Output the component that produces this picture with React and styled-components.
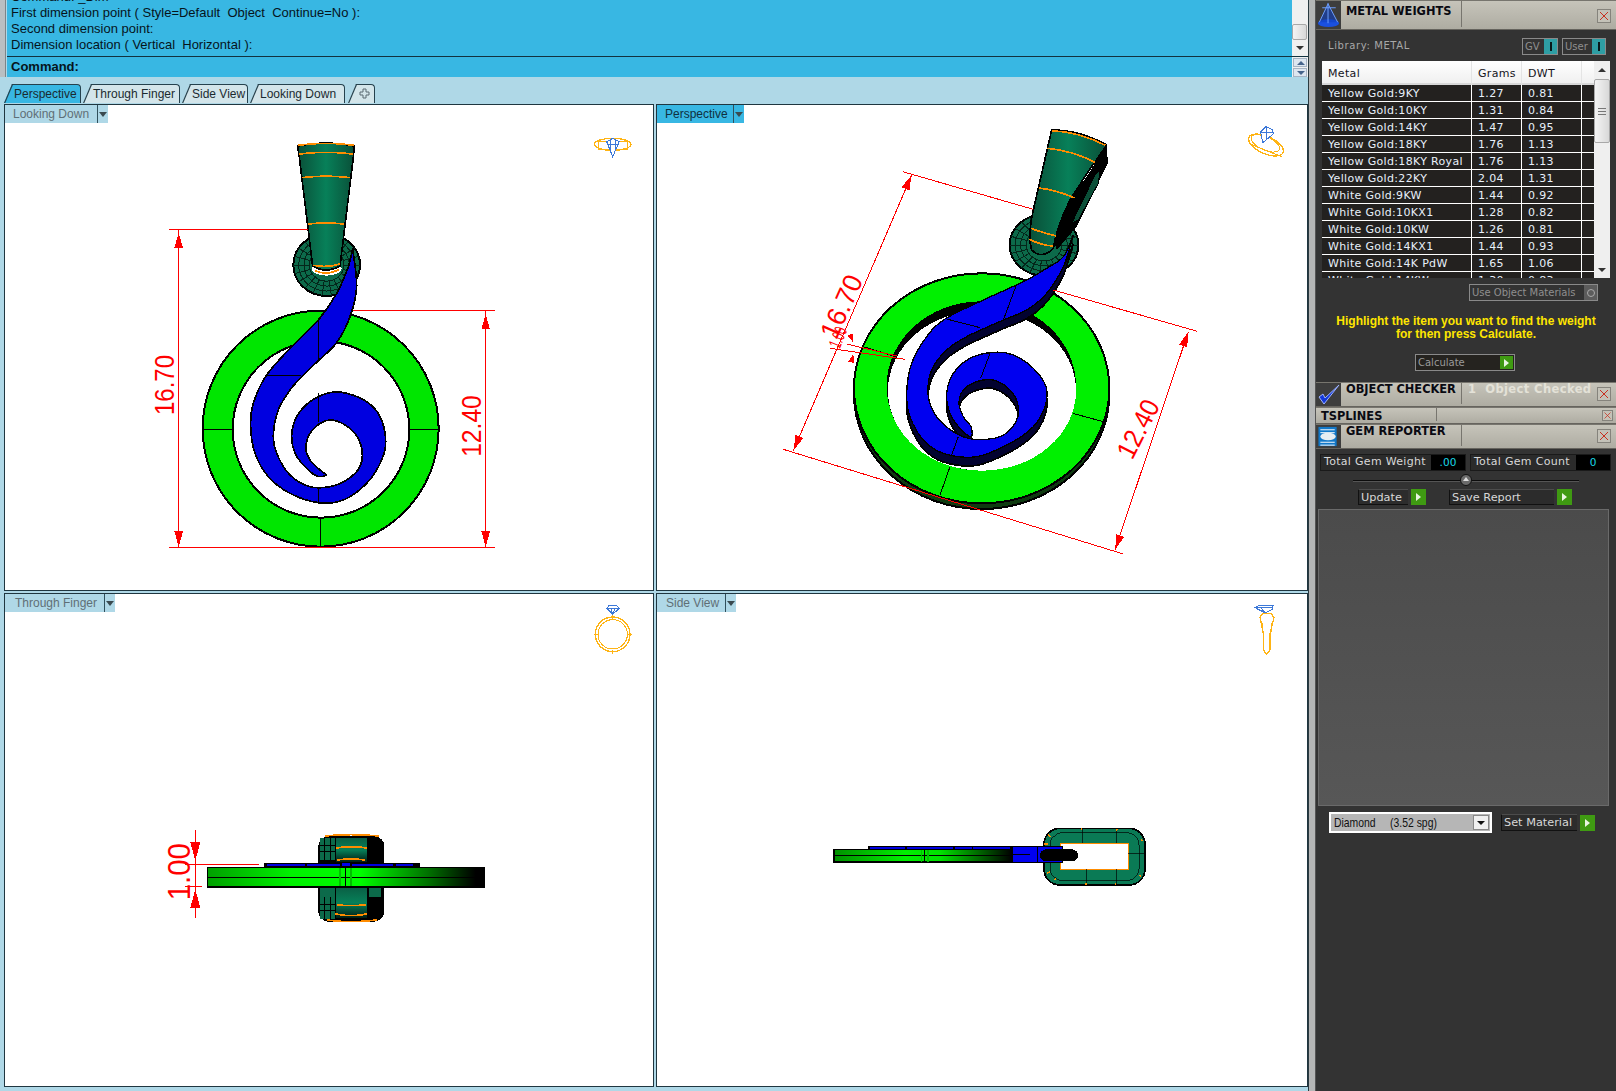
import React from "react";
import styled, { createGlobalStyle } from "styled-components";

const GlobalStyle = createGlobalStyle`
  html, body { margin: 0; padding: 0; background: #333; }
  #root { width: 1616px; height: 1091px; overflow: hidden; }
`;

// ---------- data ----------

const METALS = [
  ["Yellow Gold:9KY", "1.27", "0.81"],
  ["Yellow Gold:10KY", "1.31", "0.84"],
  ["Yellow Gold:14KY", "1.47", "0.95"],
  ["Yellow Gold:18KY", "1.76", "1.13"],
  ["Yellow Gold:18KY Royal", "1.76", "1.13"],
  ["Yellow Gold:22KY", "2.04", "1.31"],
  ["White Gold:9KW", "1.44", "0.92"],
  ["White Gold:10KX1", "1.28", "0.82"],
  ["White Gold:10KW", "1.26", "0.81"],
  ["White Gold:14KX1", "1.44", "0.93"],
  ["White Gold:14K PdW", "1.65", "1.06"],
  ["White Gold:14KW", "1.30", "0.83"],
];

const TABS = [
  { name: "Perspective", w: 77, gap: 2, active: true },
  { name: "Through Finger", w: 97, gap: 2 },
  { name: "Side View", w: 66, gap: 2 },
  { name: "Looking Down", w: 95, gap: 3 },
];

// catmull-rom through the traced points, coordinates are 3x screen px from the crops
const smooth = (pts) => {
  const n = pts.length;
  let d = `M${pts[0][0]} ${pts[0][1]}`;
  for (let i = 0; i < n - 1; i++) {
    const p0 = pts[Math.max(i - 1, 0)];
    const p1 = pts[i];
    const p2 = pts[i + 1];
    const p3 = pts[Math.min(i + 2, n - 1)];
    const c1 = [p1[0] + (p2[0] - p0[0]) / 6, p1[1] + (p2[1] - p0[1]) / 6];
    const c2 = [p2[0] - (p3[0] - p1[0]) / 6, p2[1] - (p3[1] - p1[1]) / 6];
    d += `C${c1[0]} ${c1[1]} ${c2[0]} ${c2[1]} ${p2[0]} ${p2[1]}`;
  }
  return d;
};

const spiralTop = smooth([
  [638, 385], [625, 440], [590, 520], [535, 600], [460, 675], [380, 765], [340, 850], [332, 920],
  [345, 1000], [385, 1070], [450, 1120], [535, 1148], [610, 1140], [680, 1090], [725, 1020], [737, 960],
  [720, 890], [680, 845], [620, 820], [570, 818], [510, 845], [470, 890], [455, 945], [465, 1000],
  [495, 1040], [530, 1068], [558, 1065], [540, 1050], [510, 1020], [498, 985], [510, 940], [550, 905],
  [590, 903], [640, 935], [665, 985], [660, 1040], [620, 1080], [570, 1100], [510, 1100], [450, 1065],
  [410, 1000], [400, 945], [415, 870], [450, 810], [490, 765], [535, 722], [590, 668], [630, 590],
  [650, 500], [638, 385],
]) + "Z";

const spiralPersp = smooth([
  [910, 345], [880, 410], [830, 445], [760, 485], [640, 540], [525, 597], [470, 650], [425, 730],
  [410, 820], [420, 890], [460, 960], [520, 1000], [620, 1010], [720, 970], [790, 920], [825, 860],
  [828, 800], [790, 745], [730, 705], [670, 697], [600, 715], [550, 760], [530, 820], [540, 880],
  [570, 925], [603, 950], [603, 920], [580, 890], [567, 850], [580, 810], [620, 785], [670, 780],
  [720, 810], [745, 860], [735, 910], [690, 950], [610, 958], [550, 935], [500, 890], [475, 830],
  [485, 750], [530, 690], [590, 650], [700, 600], [770, 570], [830, 520], [880, 440], [910, 345],
]) + "Z";

// ---------- drawing helpers ----------

const Canvas = styled.svg.attrs({ shapeRendering: "crispEdges" })`
  display: block;
  width: 100%;
  height: 100%;
`;

const DimText = styled.text.attrs({ textAnchor: "middle", dominantBaseline: "central", lengthAdjust: "spacingAndGlyphs" })`
  font-family: "Liberation Sans", Arial, sans-serif;
  fill: #ff0000;
`;

const Sketch = ({ at, children }) => (
  <g transform={`translate(${at[0]} ${at[1]}) scale(${1 / 3})`}>{children}</g>
);

const Arrow = ({ x, y, a, l = 46, w = 13 }) => (
  <polygon points={`0,0 ${-w},${l} ${w},${l}`} fill="#ff0000" transform={`translate(${x} ${y}) rotate(${a})`} />
);

const Dim = ({ x, y, a, len, size = 81, children }) => (
  <DimText transform={`translate(${x} ${y}) rotate(${a})`} fontSize={size} textLength={len}>
    {children}
  </DimText>
);

const Red = ({ d }) => <path d={d} stroke="#ff0000" strokeWidth="3" fill="none" />;
const Ink = ({ d, w = 3 }) => <path d={d} stroke="#000" strokeWidth={w} fill="none" />;
const Orange = ({ d, w = 5 }) => <path d={d} stroke="#ff8c00" strokeWidth={w} fill="none" />;

const Bulb = ({ cx, cy, rx, ry }) => {
  const spokes = Array.from({ length: 22 }, (v, i) => (i * Math.PI * 2) / 22);
  return (
    <g>
      <ellipse cx={cx} cy={cy} rx={rx} ry={ry} fill="#0c6a4a" stroke="#000" strokeWidth="6" />
      {[0.84, 0.68, 0.52].map((k) => (
        <ellipse key={k} cx={cx} cy={cy} rx={rx * k} ry={ry * k} fill="none" stroke="#04261a" strokeWidth="3" />
      ))}
      {spokes.map((s) => (
        <path
          key={s}
          d={`M${cx + Math.cos(s) * rx * 0.5} ${cy + Math.sin(s) * ry * 0.5}L${cx + Math.cos(s) * rx} ${cy + Math.sin(s) * ry}`}
          stroke="#04261a"
          strokeWidth="3"
        />
      ))}
    </g>
  );
};

const Gradients = () => (
  <defs>
    <linearGradient id="cone" x1="0" x2="1" y1="0" y2="0">
      <stop offset="0" stopColor="#0a4f38" />
      <stop offset="0.5" stopColor="#078059" />
      <stop offset="1" stopColor="#0a4f38" />
    </linearGradient>
    <linearGradient id="coneV" x1="0" x2="0" y1="0" y2="1">
      <stop offset="0" stopColor="#0a5f44" />
      <stop offset="0.5" stopColor="#078059" />
      <stop offset="1" stopColor="#021f15" />
    </linearGradient>
    <linearGradient id="barTF" x1="0" x2="1" y1="0" y2="0">
      <stop offset="0" stopColor="#00a000" />
      <stop offset="0.3" stopColor="#00f000" />
      <stop offset="0.55" stopColor="#00ff00" />
      <stop offset="0.8" stopColor="#007000" />
      <stop offset="0.97" stopColor="#000" />
    </linearGradient>
    <linearGradient id="barSV" x1="0" x2="1" y1="0" y2="0">
      <stop offset="0" stopColor="#009000" />
      <stop offset="0.4" stopColor="#00f000" />
      <stop offset="0.6" stopColor="#00e000" />
      <stop offset="1" stopColor="#000" />
    </linearGradient>
  </defs>
);

// ---------- the four model drawings ----------

const LookingDownModel = () => (
  <Sketch at={[140, 120]}>
    <circle cx="542" cy="926" r="354" fill="#00e600" stroke="#000" strokeWidth="6" />
    <circle cx="543" cy="928" r="265" fill="#fff" stroke="#000" strokeWidth="6" />
    <Ink d="M188 928H278M808 928H897M542 1192V1280" />
    <Bulb cx={560} cy={435} rx={100} ry={93} />
    <ellipse cx="560" cy="445" rx="45" ry="22" fill="#fff" />
    <path d="M473 78Q558 60 643 78L640 112L600 438Q558 462 518 438L478 112Z" fill="url(#cone)" stroke="#000" strokeWidth="5" />
    <Orange d="M473 76Q558 64 643 76M478 102Q558 92 638 102M486 173Q558 164 630 173M503 312Q558 306 612 312M520 436Q560 444 600 432M524 452Q560 468 598 448" />
    <path d={spiralTop} fill="#0000e0" stroke="#000" strokeWidth="5" />
    <Ink d="M536 600V722M380 767H482M536 820V905M536 1100V1148" />
    <Red d="M88 328H505M116 328V1282M88 1282H1065M640 572H1065M1037 572V1282" />
    <Arrow x={116} y={338} a={0} />
    <Arrow x={116} y={1280} a={180} />
    <Arrow x={1037} y={582} a={0} />
    <Arrow x={1037} y={1280} a={180} />
    <Dim x={75} y={795} a={-90} len={180}>16.70</Dim>
    <Dim x={995} y={918} a={-90} len={185}>12.40</Dim>
  </Sketch>
);

const PerspectiveModel = () => (
  <Sketch at={[770, 120]}>
    <ellipse cx="635" cy="822" rx="383" ry="345" fill="#0e3a10" stroke="#000" strokeWidth="6" />
    <ellipse cx="635" cy="805" rx="383" ry="345" fill="#00f000" stroke="#000" strokeWidth="6" />
    <ellipse cx="634" cy="798" rx="284" ry="254" fill="#000" />
    <ellipse cx="636" cy="812" rx="282" ry="240" fill="#fff" />
    <Ink d="M280 680L370 708M908 880L1000 905M540 1040L510 1125" />
    <Bulb cx={822} cy={375} rx={103} ry={92} />
    <path d="M1010 75L1014 130L920 320L860 390L840 320L950 170Z" fill="#000" />
    <path d="M975 165L990 150L985 190L925 300L905 310Z" fill="#0b4f38" stroke="#000" strokeWidth="3" />
    <path d="M845 30Q930 30 1010 75Q950 160 900 240Q860 320 850 385Q815 420 785 390Q772 350 790 270Z" fill="url(#cone)" stroke="#000" strokeWidth="5" />
    <Orange d="M845 32Q930 36 1006 76M832 85Q910 92 976 128M806 204Q860 210 914 234M782 325Q825 340 858 348M778 358Q815 376 848 378" />
    <path d={spiralPersp} fill="#020230" stroke="#000" strokeWidth="5" transform="translate(0 26)" />
    <path d={spiralPersp} fill="#0000f0" stroke="#000" strokeWidth="4" />
    <Ink d="M738 498L700 600M530 597L630 623M660 700L632 775M565 950L545 1005" />
    <Red d="M398 155L790 268M425 165L70 992M40 988L1060 1302M850 510L1282 634M1255 635L1035 1290M180 685L405 718M230 672L380 708" />
    <Arrow x={424} y={166} a={23} l={44} />
    <Arrow x={71} y={990} a={203} l={44} />
    <Arrow x={1254} y={636} a={19} l={44} />
    <Arrow x={1036} y={1288} a={199} l={44} />
    <Arrow x={250} y={668} a={160} l={26} w={9} />
    <Arrow x={250} y={702} a={15} l={26} w={9} />
    <Dim x={215} y={560} a={-66} len={200}>16.70</Dim>
    <Dim x={204} y={652} a={-68} len={62} size={54}>1.00</Dim>
    <Dim x={1105} y={927} a={-63} len={186}>12.40</Dim>
  </Sketch>
);

const ThroughFingerModel = () => (
  <Sketch at={[150, 810]}>
    <rect x="505" y="78" width="198" height="257" rx="32" fill="#000" />
    <rect x="510" y="85" width="46" height="66" fill="#0c6a4a" />
    <rect x="510" y="262" width="46" height="66" fill="#0c6a4a" />
    <Ink d="M510 105H556M510 125H556M524 85V150M540 85V150M510 282H556M510 302H556M524 262V328M540 262V328" />
    <rect x="558" y="85" width="93" height="70" fill="url(#coneV)" />
    <rect x="558" y="232" width="93" height="92" fill="url(#coneV)" />
    <rect x="656" y="232" width="38" height="28" fill="#0c6a4a" />
    <rect x="510" y="232" width="44" height="28" fill="#0c6a4a" />
    <Orange d="M525 78Q600 70 688 78M558 114Q605 106 650 114M560 150Q605 144 646 150M560 284Q605 290 648 284M556 312Q605 322 650 312M530 330Q600 340 680 330" />
    <rect x="342" y="160" width="468" height="14" fill="#000" />
    <path d="M350 165H465M470 165H570M605 165H730M738 165H790" stroke="#0000e0" strokeWidth="6" />
    <rect x="575" y="160" width="24" height="9" fill="#0000f0" />
    <rect x="172" y="172" width="830" height="58" fill="url(#barTF)" stroke="#000" strokeWidth="5" />
    <Ink d="M172 203H1000M586 172V230" w={3} />
    <path d="M570 174V228M603 174V228" stroke="#00c000" strokeWidth="5" />
    <Red d="M136 60V325M105 162H326M105 229H155" />
    <Arrow x={136} y={152} a={180} l={55} w={15} />
    <Arrow x={136} y={238} a={0} l={55} w={15} />
    <Dim x={88} y={185} a={-90} len={172} size={92}>1.00</Dim>
  </Sketch>
);

const SideViewModel = () => (
  <Sketch at={[820, 810]}>
    <rect x="672" y="55" width="303" height="170" rx="48" fill="#0a7a55" stroke="#000" strokeWidth="5" />
    <rect x="690" y="68" width="267" height="144" rx="36" fill="none" stroke="#000" strokeWidth="2" />
    <rect x="722" y="100" width="204" height="78" fill="#fff" stroke="#ff8c00" strokeWidth="3" />
    <Ink d="M788 55V100M888 55V100M800 178V225M888 178V225M925 130H975" w={2} />
    <Orange d="M785 54V60M892 56L888 62M685 74L692 80M672 102H684M962 88L968 92M682 190L690 186M702 210L708 206M958 196L964 200M798 218V224M886 218V224" w={4} />
    <rect x="145" y="108" width="430" height="12" fill="#000" />
    <path d="M150 113H255M262 113H400M405 113H455M460 113H570" stroke="#0000e0" strokeWidth="5" />
    <rect x="42" y="118" width="533" height="38" fill="url(#barSV)" stroke="#000" strokeWidth="5" />
    <Ink d="M42 136H575M313 118V156" w={3} />
    <path d="M304 120V155M324 120V155" stroke="#00c000" strokeWidth="5" />
    <rect x="576" y="110" width="150" height="46" fill="#0000f0" stroke="#000" strokeWidth="3" />
    <Ink d="M652 110V155M580 133H630" w={3} />
    <rect x="660" y="118" width="114" height="36" rx="18" fill="#000" />
    <Ink d="M676 124V148" w={2} />
  </Sketch>
);

// orientation gizmos, top right corner of each view
const Gold = "#ffb414";
const Sky = "#3c78d8";

const GizmoTop = () => (
  <Sketch at={[570, 120]}>
    <ellipse cx="128" cy="73" rx="55" ry="18" fill="none" stroke={Gold} strokeWidth="4" />
    <rect x="84" y="65" width="88" height="22" fill="none" stroke={Gold} strokeWidth="3" />
    <path d="M110 65L128 55L148 65L128 110ZM120 60V90M136 60V90M110 72H148" fill="#fff" stroke={Sky} strokeWidth="3" />
  </Sketch>
);

const GizmoPersp = () => (
  <Sketch at={[1230, 120]}>
    <ellipse cx="108" cy="75" rx="56" ry="26" transform="rotate(24 108 75)" fill="none" stroke={Gold} strokeWidth="4" />
    <ellipse cx="106" cy="70" rx="46" ry="20" transform="rotate(24 106 70)" fill="none" stroke={Gold} strokeWidth="3" />
    <path d="M60 72L155 110" stroke={Gold} strokeWidth="3" />
    <path d="M92 35L108 20L128 30L130 42L98 68ZM108 20V60M92 38H130" fill="#fff" stroke={Sky} strokeWidth="3" />
  </Sketch>
);

const GizmoFinger = () => (
  <Sketch at={[575, 595]}>
    <circle cx="113" cy="118" r="52" fill="none" stroke={Gold} strokeWidth="4" />
    <circle cx="113" cy="118" r="44" fill="none" stroke={Gold} strokeWidth="3" />
    <path d="M113 58V72M58 118H72M156 118H170M113 165V177" stroke={Gold} strokeWidth="3" />
    <path d="M95 40L103 31H125L133 40L113 58ZM95 40H133M107 40L113 58M120 40L113 58" fill="none" stroke={Sky} strokeWidth="3" />
  </Sketch>
);

const GizmoSide = () => (
  <Sketch at={[1240, 595]}>
    <path d="M60 66L70 55H94L102 68L90 115V165L79 177L70 165V115Z" fill="none" stroke={Gold} strokeWidth="4" />
    <path d="M66 85L70 115M96 85L90 135" stroke={Gold} strokeWidth="3" />
    <path d="M45 38L60 30H100L96 44L76 54ZM45 38H98M62 38L76 54" fill="none" stroke={Sky} strokeWidth="3" />
  </Sketch>
);

// ---------- left: command area, tabs, viewports ----------

const Page = styled.div`
  display: flex;
  width: 1616px;
  height: 1091px;
`;

const Workspace = styled.div`
  display: flex;
  flex-direction: column;
  width: 1308px;
  background: #afd8e7;
`;

const CommandArea = styled.div`
  display: flex;
  height: 77px;
  flex: none;
`;

const Grip = styled.div`
  width: 6px;
  margin-right: 1px;
  background: #b9bfc2;
  border-right: 1px solid #7b8488;
  box-sizing: border-box;
`;

const CommandBody = styled.div`
  flex: 1;
  display: flex;
  flex-direction: column;
  background: #38b7e3;
  color: #06141c;
  font-family: "Liberation Sans", Arial, sans-serif;
`;

const Log = styled.div`
  height: 57px;
  box-sizing: border-box;
  flex: none;
  overflow: hidden;
  display: flex;
  flex-direction: column;
  justify-content: flex-end;
  padding: 0 0 3px 4px;
  border-bottom: 1px solid #12323f;
  font-size: 13px;
  line-height: 16px;
`;

const LogLine = styled.div`
  white-space: pre;
`;

const Prompt = styled.div`
  padding: 1px 0 0 4px;
  font-size: 13px;
  line-height: 17px;
  font-weight: bold;
`;

const CommandScroll = styled.div`
  width: 16px;
  flex: none;
  display: flex;
  flex-direction: column;
  background: #f0f0f0;
`;

const ScrollUpper = styled.div`
  height: 57px;
  flex: none;
  position: relative;
  border-bottom: 1px solid #12323f;
  box-sizing: border-box;
`;

const ScrollThumb = styled.div`
  position: absolute;
  top: ${(p) => p.$top}px;
  left: 0;
  width: ${(p) => p.$w || 15}px;
  height: ${(p) => p.$h}px;
  box-sizing: border-box;
  border: 1px solid #a8a8a8;
  border-radius: 2px;
  background: linear-gradient(90deg, #f4f4f4, #d8d8d8);
  display: flex;
  align-items: center;
  justify-content: center;
`;

const ThumbGrip = styled.div`
  width: 8px;
  height: 7px;
  background: repeating-linear-gradient(#777 0 1px, transparent 1px 3px);
`;

const ArrowGlyph = styled.div`
  position: absolute;
  left: ${(p) => p.$left || 4}px;
  top: ${(p) => p.$top}px;
  width: 0;
  height: 0;
  border-left: 4px solid transparent;
  border-right: 4px solid transparent;
  ${(p) => (p.$up ? "border-bottom" : "border-top")}: 4px solid ${(p) => p.$color || "#333"};
`;

const Spin = styled.div`
  height: 9px;
  margin: 1px 1px 0 1px;
  background: #dde6f0;
  border: 1px solid #a6b4c4;
  box-sizing: border-box;
  position: relative;
`;

const TabBar = styled.div`
  height: 27px;
  flex: none;
  box-sizing: border-box;
  padding: 7px 0 0 4px;
  display: flex;
  align-items: flex-start;
`;

const Tab = styled.div`
  position: relative;
  flex: none;
  width: ${(p) => p.$w}px;
  height: 19px;
  margin-right: ${(p) => p.$gap}px;
  box-sizing: border-box;
  padding-left: 10px;
  background: ${(p) => (p.$active ? "#38b7e3" : "#d3e5ea")};
  border-top: 1px solid #25414d;
  border-right: 1px solid #25414d;
  border-top-right-radius: 4px;
  clip-path: polygon(0 100%, 8px 0, 100% 0, 100% 100%);
  font-family: "Liberation Sans", Arial, sans-serif;
  font-size: 12px;
  line-height: 18px;
  white-space: nowrap;
  color: #1b2a30;

  &::before {
    content: "";
    position: absolute;
    left: 3px;
    top: -2px;
    width: 2px;
    height: 22px;
    background: #25414d;
    transform: rotate(23deg);
  }

  svg {
    display: block;
    width: 11px;
    height: 11px;
    margin: 3px 0 0 1px;
  }
`;

const ViewGrid = styled.div`
  flex: 1;
  display: grid;
  grid-template-columns: 650px 652px;
  grid-template-rows: 487px 494px;
  column-gap: 2px;
  row-gap: 2px;
  padding-left: 4px;
`;

const Viewport = styled.div`
  position: relative;
  box-sizing: border-box;
  background: #fff;
  border: 1px solid #1f3640;
  overflow: hidden;
`;

const ViewLabel = styled.div`
  position: absolute;
  top: 0;
  left: 0;
  width: ${(p) => p.$w}px;
  height: 18px;
  box-sizing: border-box;
  padding-left: ${(p) => p.$pad}px;
  background: ${(p) => (p.$active ? "#38b7e3" : "#afd8e7")};
  color: ${(p) => (p.$active ? "#103040" : "#5f6f76")};
  font-family: "Liberation Sans", Arial, sans-serif;
  font-size: 12px;
  line-height: 18px;
  white-space: nowrap;
`;

const ViewCaret = styled.div`
  position: absolute;
  right: 0;
  top: 0;
  width: 10px;
  height: 18px;
  border-left: 1px solid #30505c;

  &::after {
    content: "";
    position: absolute;
    left: 1px;
    top: 7px;
    border-left: 4px solid transparent;
    border-right: 4px solid transparent;
    border-top: 5px solid #3a4a50;
  }
`;

const View = ({ label, labelWidth, pad, active, box, children }) => (
  <Viewport>
    <Canvas viewBox={box.join(" ")}>
      <Gradients />
      {children}
    </Canvas>
    <ViewLabel $w={labelWidth} $pad={pad} $active={active}>
      {label}
      <ViewCaret />
    </ViewLabel>
  </Viewport>
);

// ---------- right: tool panels ----------

const Splitter = styled.div`
  width: 8px;
  flex: none;
  box-sizing: border-box;
  background: #b4b6b6;
  border-left: 1px solid #2a3a40;
  border-right: 1px solid #555;
`;

const Side = styled.div`
  flex: 1;
  display: flex;
  flex-direction: column;
  background: #333333;
  color: #ddd;
  font-family: "DejaVu Sans", Verdana, sans-serif;
  font-size: 11px;
`;

const Header = styled.div`
  position: relative;
  display: flex;
  height: ${(p) => p.$h}px;
  flex: none;
  margin-top: ${(p) => p.$mt || 0}px;
  box-sizing: border-box;
  background: linear-gradient(#c6c4ba, #aeaca2);
  border-top: 1px solid #77756e;
  border-bottom: 1px solid #66645e;
`;

const HeaderIcon = styled.div`
  width: 25px;
  flex: none;
  background: #3d3d3d;
`;

const HeaderTitle = styled.div`
  width: 121px;
  flex: none;
  box-sizing: border-box;
  padding: ${(p) => p.$pt || 0}px 0 0 5px;
  font-weight: bold;
  font-size: 11.4px;
  line-height: 13px;
  color: #0a0a12;
  border-right: 1px solid #77756e;
  margin-bottom: 2px;
`;

const HeaderNote = styled.div`
  padding-left: 6px;
  font-weight: bold;
  font-size: 11.5px;
  line-height: 13px;
  color: #e4e2d8;
  letter-spacing: 0.4px;
  white-space: pre;
`;

const Close = styled.div`
  position: absolute;
  right: ${(p) => p.$r || 5}px;
  top: ${(p) => p.$t}px;
  width: ${(p) => p.$s || 14}px;
  height: ${(p) => p.$s || 14}px;
  box-sizing: border-box;
  background: #c4c2b8;
  border: 1px solid #85837c;

  svg {
    display: block;
    width: 100%;
    height: 100%;
  }
`;

const CloseMark = ({ t, r, s }) => (
  <Close $t={t} $r={r} $s={s}>
    <svg viewBox="0 0 12 12">
      <path d="M2 2L10 10M10 2L2 10" stroke="#c83020" strokeWidth="1" fill="none" />
    </svg>
  </Close>
);

const IconSvg = styled.svg`
  display: block;
  width: 25px;
  height: 100%;
`;

const ScaleIcon = () => (
  <IconSvg viewBox="0 0 25 29">
    <ellipse cx="12.500" cy="23" rx="11" ry="4" fill="#1a50e0" />
    <path d="M12 3L3 22H22Z" fill="#0f3fc0" opacity="0.6" />
    <path d="M12 3L3 22M12 3L22 22M12 2V23M6 7H20" stroke="#6fa0ff" strokeWidth="1" fill="none" />
  </IconSvg>
);

const CheckIcon = () => (
  <IconSvg viewBox="0 0 25 23">
    <path d="M3 14L8 21L23 2L9 15L7 11Z" fill="#1438d8" stroke="#9fb4ff" strokeWidth="1" />
  </IconSvg>
);

const GemIcon = () => (
  <IconSvg viewBox="0 0 25 24">
    <rect x="2" y="2" width="19" height="20" fill="#1278c8" />
    <path d="M4 5H19M4 8H19M4 18H19M4 21H19" stroke="#fff" strokeWidth="1" />
    <ellipse cx="12" cy="12" rx="8" ry="4" fill="#e8eef2" />
  </IconSvg>
);

const LibraryRow = styled.div`
  display: flex;
  align-items: center;
  height: 16px;
  margin-top: 8px;
  padding: 0 10px 0 12px;
  gap: 4px;
  color: #a8a8a8;
  font-size: 10px;
`;

const LibraryName = styled.div`
  flex: 1;
  letter-spacing: 0.6px;
  padding-bottom: 2px;
`;

const Toggle = styled.div`
  display: flex;
  justify-content: space-between;
  width: ${(p) => p.$w}px;
  height: 17px;
  box-sizing: border-box;
  padding-left: 2px;
  border: 1px solid #8a8a8a;
  line-height: 16px;
  color: #8f8f8f;
  font-size: 10px;
  white-space: nowrap;
`;

const ToggleKnob = styled.div`
  width: 13px;
  background: ${(p) => (p.$off ? "#5c5c5c" : "#2e9ea4")};
  display: flex;
  align-items: center;
  justify-content: center;
`;

const KnobBar = styled.div`
  width: 2px;
  height: 9px;
  background: #08181a;
`;

const KnobRing = styled.div`
  width: 6px;
  height: 6px;
  border: 1px solid #aaa;
  border-radius: 50%;
`;

const MetalBox = styled.div`
  display: flex;
  height: 217px;
  margin: 7px 6px 0 6px;
  overflow: hidden;
  background: #fff;
`;

const MetalTable = styled.div`
  flex: 1;
  display: flex;
  flex-direction: column;
  overflow: hidden;
  letter-spacing: 0.33px;
`;

const metalColumns = "150px 50px 60px 11px";

const MetalHead = styled.div`
  display: grid;
  grid-template-columns: ${metalColumns};
  height: 24px;
  flex: none;
  box-sizing: border-box;
  line-height: 25px;
  color: #14141c;
  background: linear-gradient(#fff, #f0f0f0);
  border-bottom: 2px solid #d8d8d8;
`;

const MetalCell = styled.div`
  padding-left: 6px;
  border-right: 1px solid #e4e4e4;
  white-space: nowrap;
`;

const MetalRow = styled.div`
  display: grid;
  grid-template-columns: ${metalColumns};
  height: 17px;
  flex: none;
  box-sizing: border-box;
  background: #23211f;
  color: #e8f0fa;
  border-bottom: 1px solid #fff;
  line-height: 18px;
`;

const MetalValue = styled.div`
  padding-left: 6px;
  border-right: 1px solid #fff;
  white-space: nowrap;
`;

const MetalScroll = styled.div`
  position: relative;
  width: 16px;
  flex: none;
  background: #efefef;
`;

const MaterialsRow = styled.div`
  display: flex;
  justify-content: flex-end;
  margin: 6px 18px 0 0;
`;

const Hint = styled.div`
  margin-top: 14px;
  text-align: center;
  color: #ffe600;
  font-family: "Liberation Sans", Arial, sans-serif;
  font-weight: bold;
  font-size: 12px;
  line-height: 13px;
`;

const CalcRow = styled.div`
  display: flex;
  justify-content: center;
  margin: 13px 0 0 0;
  padding-right: 2px;
`;

const CalcBox = styled.div`
  display: flex;
  justify-content: space-between;
  align-items: center;
  width: 100px;
  height: 17px;
  box-sizing: border-box;
  padding: 0 1px 0 2px;
  background: #25231f;
  border: 1px solid #8a8a8a;
  color: #9a9a9a;
  font-size: 10px;
`;

const Go = styled.div`
  width: ${(p) => p.$w || 15}px;
  height: ${(p) => p.$h || 16}px;
  flex: none;
  background: #3f9a12;
  display: flex;
  align-items: center;
  justify-content: center;

  &::after {
    content: "";
    border-left: 5px solid #e8f5e0;
    border-top: 4px solid transparent;
    border-bottom: 4px solid transparent;
  }
`;

const Totals = styled.div`
  display: flex;
  height: 17px;
  margin-top: 5px;
  padding: 0 5px 0 4px;
  gap: 4px;
`;

const TotalBox = styled.div`
  display: flex;
  flex: ${(p) => p.$grow};
  box-sizing: border-box;
  border: 1px solid #1a1a1a;
  line-height: 14px;
  background: #2b2b2b;
  color: #d8d8d8;
`;

const TotalLabel = styled.div`
  flex: 1;
  padding-left: 3px;
  white-space: nowrap;
  letter-spacing: 0.3px;
`;

const TotalValue = styled.div`
  width: 34px;
  background: #000;
  color: #18d8e8;
  text-align: center;
  font-size: 10.5px;
`;

const Slider = styled.div`
  position: relative;
  height: 18px;
  margin: 0 37px;
  flex: none;

  &::before {
    content: "";
    position: absolute;
    left: 0;
    right: 0;
    top: 9px;
    height: 1px;
    background: #0c0c0c;
    border-bottom: 1px solid #555;
  }
`;

const SliderKnob = styled.div`
  position: absolute;
  left: 107px;
  top: 3px;
  width: 12px;
  height: 12px;
  box-sizing: border-box;
  border: 1px solid #111;
  border-radius: 50%;
  background: #6a6a6a;

  &::after {
    content: "";
    position: absolute;
    left: 2px;
    top: 2px;
    border-left: 3px solid transparent;
    border-right: 3px solid transparent;
    border-bottom: 4px solid #ddd;
  }
`;

const ActionRow = styled.div`
  display: flex;
  height: 16px;
  flex: none;
  padding-left: 42px;
`;

const ActionLabel = styled.div`
  width: ${(p) => p.$w}px;
  margin-right: 3px;
  box-sizing: border-box;
  padding-left: 2px;
  background: #2c2c2c;
  border-left: 1px solid #111;
  border-bottom: 1px solid #111;
  border-top: 1px solid #4c4c4c;
  line-height: 15px;
  color: #d8d8d8;
  font-size: 11.3px;
  white-space: nowrap;
`;

const ActionGap = styled.div`
  width: ${(p) => p.$w}px;
`;

const ReportPanel = styled.div`
  height: 297px;
  flex: none;
  margin: 4px 7px 0 2px;
  box-sizing: border-box;
  border: 1px solid #6a6a6a;
  background: linear-gradient(#4b4b4b, #575757);
`;

const SelectRow = styled.div`
  display: flex;
  align-items: center;
  height: 21px;
  flex: none;
  margin-top: 6px;
  padding-left: 13px;
`;

const MaterialSelect = styled.div`
  position: relative;
  width: 163px;
  height: 21px;
  box-sizing: border-box;
  border: 2px solid #fff;
  background: #b6b6b6;
  color: #111;
  margin-right: 9px;
  padding-left: 3px;
  font-family: "Liberation Sans", Arial, sans-serif;
  font-size: 13px;
  line-height: 17px;
`;

const SelectText = styled.span`
  display: block;
  white-space: pre;
  transform: scaleX(0.8);
  transform-origin: 0 50%;
`;

const SelectButton = styled.div`
  position: absolute;
  right: 1px;
  top: 1px;
  width: 16px;
  height: 15px;
  background: #efefef;
  border: 1px solid #888;
  box-sizing: border-box;

  &::after {
    content: "";
    position: absolute;
    left: 3px;
    top: 5px;
    border-left: 4px solid transparent;
    border-right: 4px solid transparent;
    border-top: 4px solid #111;
  }
`;

// ---------- page ----------

export default function App() {
  return (
    <Page>
      <GlobalStyle />
      <Workspace>
        <CommandArea>
          <Grip />
          <CommandBody>
            <Log>
              <LogLine>Command: _Dim</LogLine>
              <LogLine>First dimension point ( Style=Default  Object  Continue=No ):</LogLine>
              <LogLine>Second dimension point:</LogLine>
              <LogLine>Dimension location ( Vertical  Horizontal ):</LogLine>
            </Log>
            <Prompt>Command:</Prompt>
          </CommandBody>
          <CommandScroll>
            <ScrollUpper>
              <ScrollThumb $top={24} $h={16} />
              <ArrowGlyph $top={46} />
            </ScrollUpper>
            <Spin>
              <ArrowGlyph $top={2} $left={3} $up $color="#46648c" />
            </Spin>
            <Spin>
              <ArrowGlyph $top={2} $left={3} $color="#46648c" />
            </Spin>
          </CommandScroll>
        </CommandArea>

        <TabBar>
          {TABS.map((t) => (
            <Tab key={t.name} $w={t.w} $gap={t.gap} $active={t.active}>
              {t.name}
            </Tab>
          ))}
          <Tab $w={27} $gap={0}>
            <svg viewBox="0 0 11 11">
              <path d="M4 1H7V4H10V7H7V10H4V7H1V4H4Z" fill="none" stroke="#5a6a72" strokeWidth="1" />
            </svg>
          </Tab>
        </TabBar>

        <ViewGrid>
          <View label="Looking Down" labelWidth={103} pad={8} box={[5, 105, 648, 485]}>
            <LookingDownModel />
            <GizmoTop />
          </View>
          <View label="Perspective" labelWidth={87} pad={8} active box={[657, 105, 650, 485]}>
            <PerspectiveModel />
            <GizmoPersp />
          </View>
          <View label="Through Finger" labelWidth={110} pad={10} box={[5, 594, 648, 492]}>
            <ThroughFingerModel />
            <GizmoFinger />
          </View>
          <View label="Side View" labelWidth={79} pad={9} box={[657, 594, 650, 492]}>
            <SideViewModel />
            <GizmoSide />
          </View>
        </ViewGrid>
      </Workspace>

      <Splitter />

      <Side>
        <Header $h={30}>
          <HeaderIcon>
            <ScaleIcon />
          </HeaderIcon>
          <HeaderTitle $pt={4}>METAL WEIGHTS</HeaderTitle>
          <CloseMark t={8} />
        </Header>
        <LibraryRow>
          <LibraryName>Library: METAL</LibraryName>
          <Toggle $w={36}>
            GV
            <ToggleKnob>
              <KnobBar />
            </ToggleKnob>
          </Toggle>
          <Toggle $w={44}>
            User
            <ToggleKnob>
              <KnobBar />
            </ToggleKnob>
          </Toggle>
        </LibraryRow>

        <MetalBox>
          <MetalTable>
            <MetalHead>
              <MetalCell>Metal</MetalCell>
              <MetalCell>Grams</MetalCell>
              <MetalCell>DWT</MetalCell>
              <div />
            </MetalHead>
            {METALS.map((m) => (
              <MetalRow key={m[0]}>
                <MetalValue>{m[0]}</MetalValue>
                <MetalValue>{m[1]}</MetalValue>
                <MetalValue>{m[2]}</MetalValue>
                <div />
              </MetalRow>
            ))}
          </MetalTable>
          <MetalScroll>
            <ArrowGlyph $top={7} $up />
            <ScrollThumb $top={18} $h={64} $w={16}>
              <ThumbGrip />
            </ScrollThumb>
            <ArrowGlyph $top={207} />
          </MetalScroll>
        </MetalBox>

        <MaterialsRow>
          <Toggle $w={129}>
            Use Object Materials
            <ToggleKnob $off>
              <KnobRing />
            </ToggleKnob>
          </Toggle>
        </MaterialsRow>

        <Hint>
          Highlight the item you want to find the weight
          <br />
          for then press Calculate.
        </Hint>

        <CalcRow>
          <CalcBox>
            Calculate
            <Go $w={13} $h={13} />
          </CalcBox>
        </CalcRow>

        <Header $h={25} $mt={11}>
          <HeaderIcon>
            <CheckIcon />
          </HeaderIcon>
          <HeaderTitle>OBJECT CHECKER</HeaderTitle>
          <HeaderNote>1  Object Checked</HeaderNote>
          <CloseMark t={4} />
        </Header>
        <Header $h={17}>
          <HeaderTitle $pt={2}>TSPLINES</HeaderTitle>
          <CloseMark t={2} r={3} s={11} />
        </Header>
        <Header $h={25}>
          <HeaderIcon>
            <GemIcon />
          </HeaderIcon>
          <HeaderTitle>GEM REPORTER</HeaderTitle>
          <CloseMark t={4} />
        </Header>

        <Totals>
          <TotalBox $grow="146">
            <TotalLabel>Total Gem Weight</TotalLabel>
            <TotalValue>.00</TotalValue>
          </TotalBox>
          <TotalBox $grow="141">
            <TotalLabel>Total Gem Count</TotalLabel>
            <TotalValue>0</TotalValue>
          </TotalBox>
        </Totals>

        <Slider>
          <SliderKnob />
        </Slider>

        <ActionRow>
          <ActionLabel $w={50}>Update</ActionLabel>
          <Go />
          <ActionGap $w={23} />
          <ActionLabel $w={105}>Save Report</ActionLabel>
          <Go />
        </ActionRow>

        <ReportPanel />

        <SelectRow>
          <MaterialSelect>
            <SelectText>Diamond     (3.52 spg)</SelectText>
            <SelectButton />
          </MaterialSelect>
          <ActionLabel $w={76}>Set Material</ActionLabel>
          <Go />
        </SelectRow>
      </Side>
    </Page>
  );
}
